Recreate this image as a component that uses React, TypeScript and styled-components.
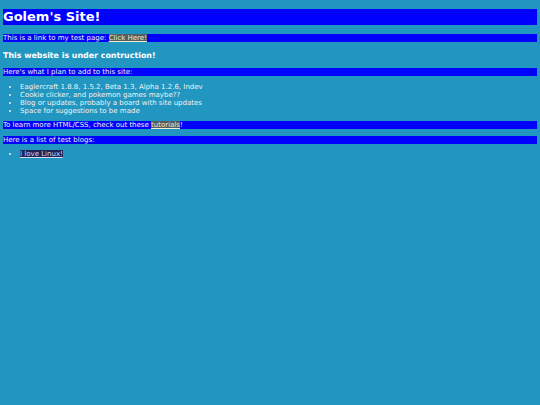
import React from "react";
import styled, { createGlobalStyle } from "styled-components";

const GlobalStyle = createGlobalStyle`
  html, body {
    background-color: #2196c0;
  }
  body {
    margin: 0;
    padding: 0 3px;
    font-family: "DejaVu Sans", Verdana, sans-serif;
    font-size: 7px;
    line-height: 8px;
    color: #f2f2f2;
  }
`;

const Title = styled.h1`
  margin: 9px 0;
  background-color: #0000ff;
  color: #ffffff;
  font-size: 13px;
  line-height: 16px;
  font-weight: bold;
`;

const Heading = styled.h2`
  margin: 8.5px 0;
  font-size: 7.9px;
  line-height: 9px;
  font-weight: bold;
  color: #ffffff;
`;

const Bar = styled.p`
  margin: 6.5px 0;
  background-color: #0000ff;
  line-height: 8px;
`;

const List = styled.ul`
  margin: 6.5px 0;
  padding-left: 17px;
  line-height: 8px;
`;

const Link = styled.a<{ $visited?: boolean }>`
  background-color: ${(p) => (p.$visited ? "#1f2559" : "#555d5e")};
  color: ${(p) => (p.$visited ? "#dcdcec" : "#f2ecd0")};
  text-decoration: underline;
`;

const plans = [
  "Eaglercraft 1.8.8, 1.5.2, Beta 1.3, Alpha 1.2.6, Indev",
  "Cookie clicker, and pokemon games maybe??",
  "Blog or updates, probably a board with site updates",
  "Space for suggestions to be made",
];

const App = () => {
  return (
    <>
      <GlobalStyle />
      <Title>Golem's Site!</Title>
      <Bar>
        This is a link to my test page: <Link href="#">Click Here!</Link>
      </Bar>
      <Heading>This website is under contruction!</Heading>
      <Bar>Here's what I plan to add to this site:</Bar>
      <List>
        {plans.map((item) => (
          <li key={item}>{item}</li>
        ))}
      </List>
      <Bar>
        To learn more HTML/CSS, check out these <Link href="#">tutorials</Link>!
      </Bar>
      <Bar>Here is a list of test blogs:</Bar>
      <List>
        <li>
          <Link href="#" $visited>
            I love Linux!
          </Link>
        </li>
      </List>
    </>
  );
};

export default App;
